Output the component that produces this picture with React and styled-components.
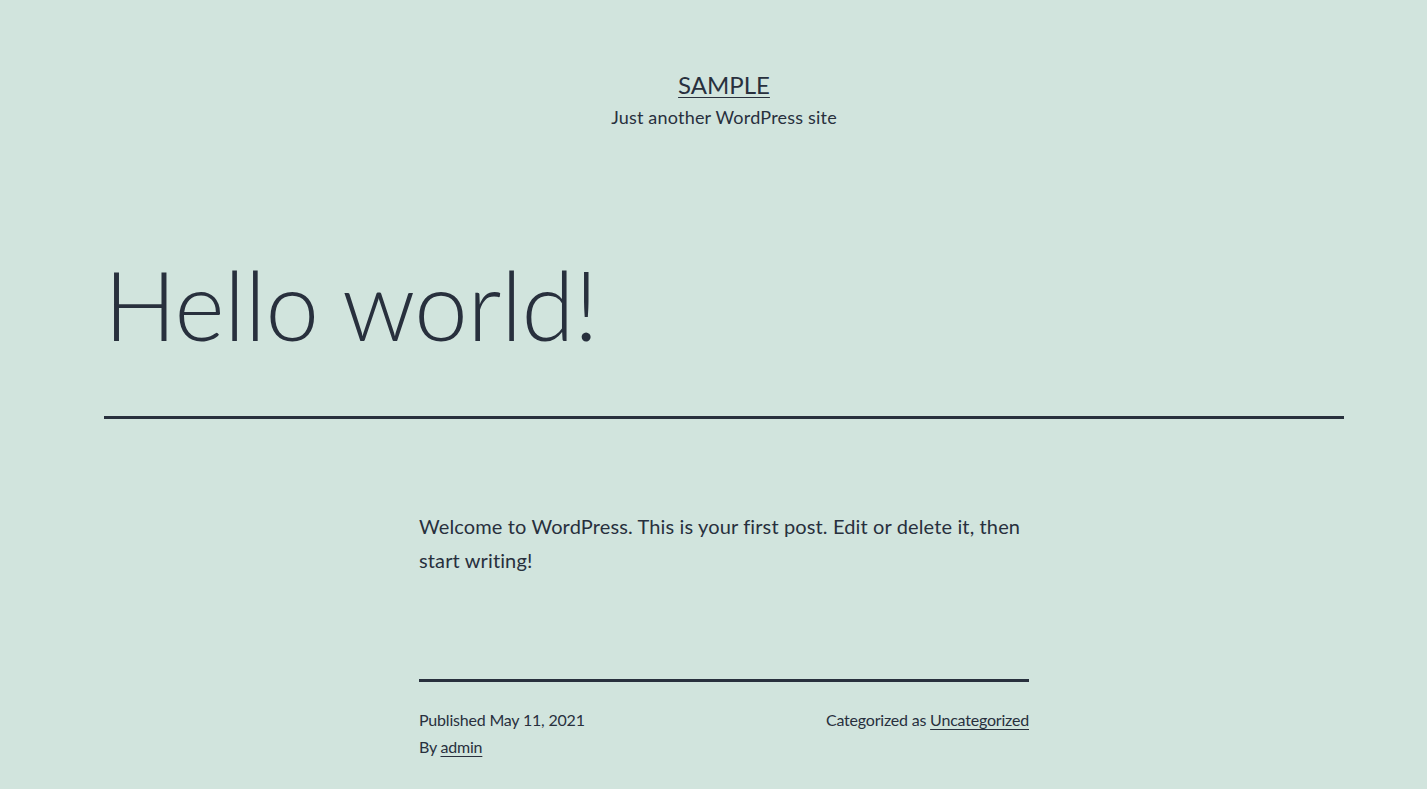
import styled, { createGlobalStyle } from 'styled-components'

const GlobalStyle = createGlobalStyle`
  html, body {
    margin: 0;
    padding: 0;
    background: #d1e4dd;
    color: #28303d;
    font-family: Lato, "Noto Sans", sans-serif;
  }
`

const Page = styled.div`
  min-height: 789px;
  padding: 0 83px 0 104px;
`

const SiteHeader = styled.header`
  display: flex;
  flex-direction: column;
  align-items: center;
  padding-top: 69px;
`

const SiteTitle = styled.a`
  font-size: 24px;
  line-height: 31px;
  text-transform: uppercase;
  color: inherit;
  text-decoration: underline;
  text-decoration-thickness: 1px;
  text-underline-offset: 3px;
`

const Tagline = styled.p`
  margin: 5px 0 0;
  font-size: 18px;
  line-height: 25px;
  letter-spacing: 0.2px;
`

const EntryHeader = styled.div`
  max-width: 1240px;
  margin: 121px auto 0;
  padding-bottom: 59px;
  border-bottom: 3px solid #28303d;
`

const EntryTitle = styled.h1`
  margin: 0;
  font-size: 96px;
  font-weight: 300;
  line-height: 106px;
  letter-spacing: -0.5px;
`

const Content = styled.div`
  max-width: 610px;
  margin: 0 auto;
  padding-top: 90px;
`

const Paragraph = styled.p`
  margin: 0;
  font-size: 20px;
  line-height: 34px;
  letter-spacing: 0.13px;
`

const EntryFooter = styled.footer`
  margin-top: 102px;
  padding-top: 24px;
  border-top: 3px solid #28303d;
  display: flex;
  justify-content: space-between;
  font-size: 16px;
  line-height: 27px;
  letter-spacing: -0.2px;
`

const MetaColumn = styled.div`
  display: flex;
  flex-direction: column;
`

const MetaLink = styled.a`
  color: inherit;
  text-decoration: underline;
  text-decoration-thickness: 1px;
  text-underline-offset: 3px;
`

export default function App() {
  return (
    <>
      <GlobalStyle />
      <Page>
        <SiteHeader>
          <SiteTitle href='#'>Sample</SiteTitle>
          <Tagline>Just another WordPress site</Tagline>
        </SiteHeader>
        <EntryHeader>
          <EntryTitle>Hello world!</EntryTitle>
        </EntryHeader>
        <Content>
          <Paragraph>
            Welcome to WordPress. This is your first post. Edit or delete it, then start writing!
          </Paragraph>
          <EntryFooter>
            <MetaColumn>
              <span>Published May 11, 2021</span>
              <span>By <MetaLink href='#'>admin</MetaLink></span>
            </MetaColumn>
            <div>Categorized as <MetaLink href='#'>Uncategorized</MetaLink></div>
          </EntryFooter>
        </Content>
      </Page>
    </>
  )
}
